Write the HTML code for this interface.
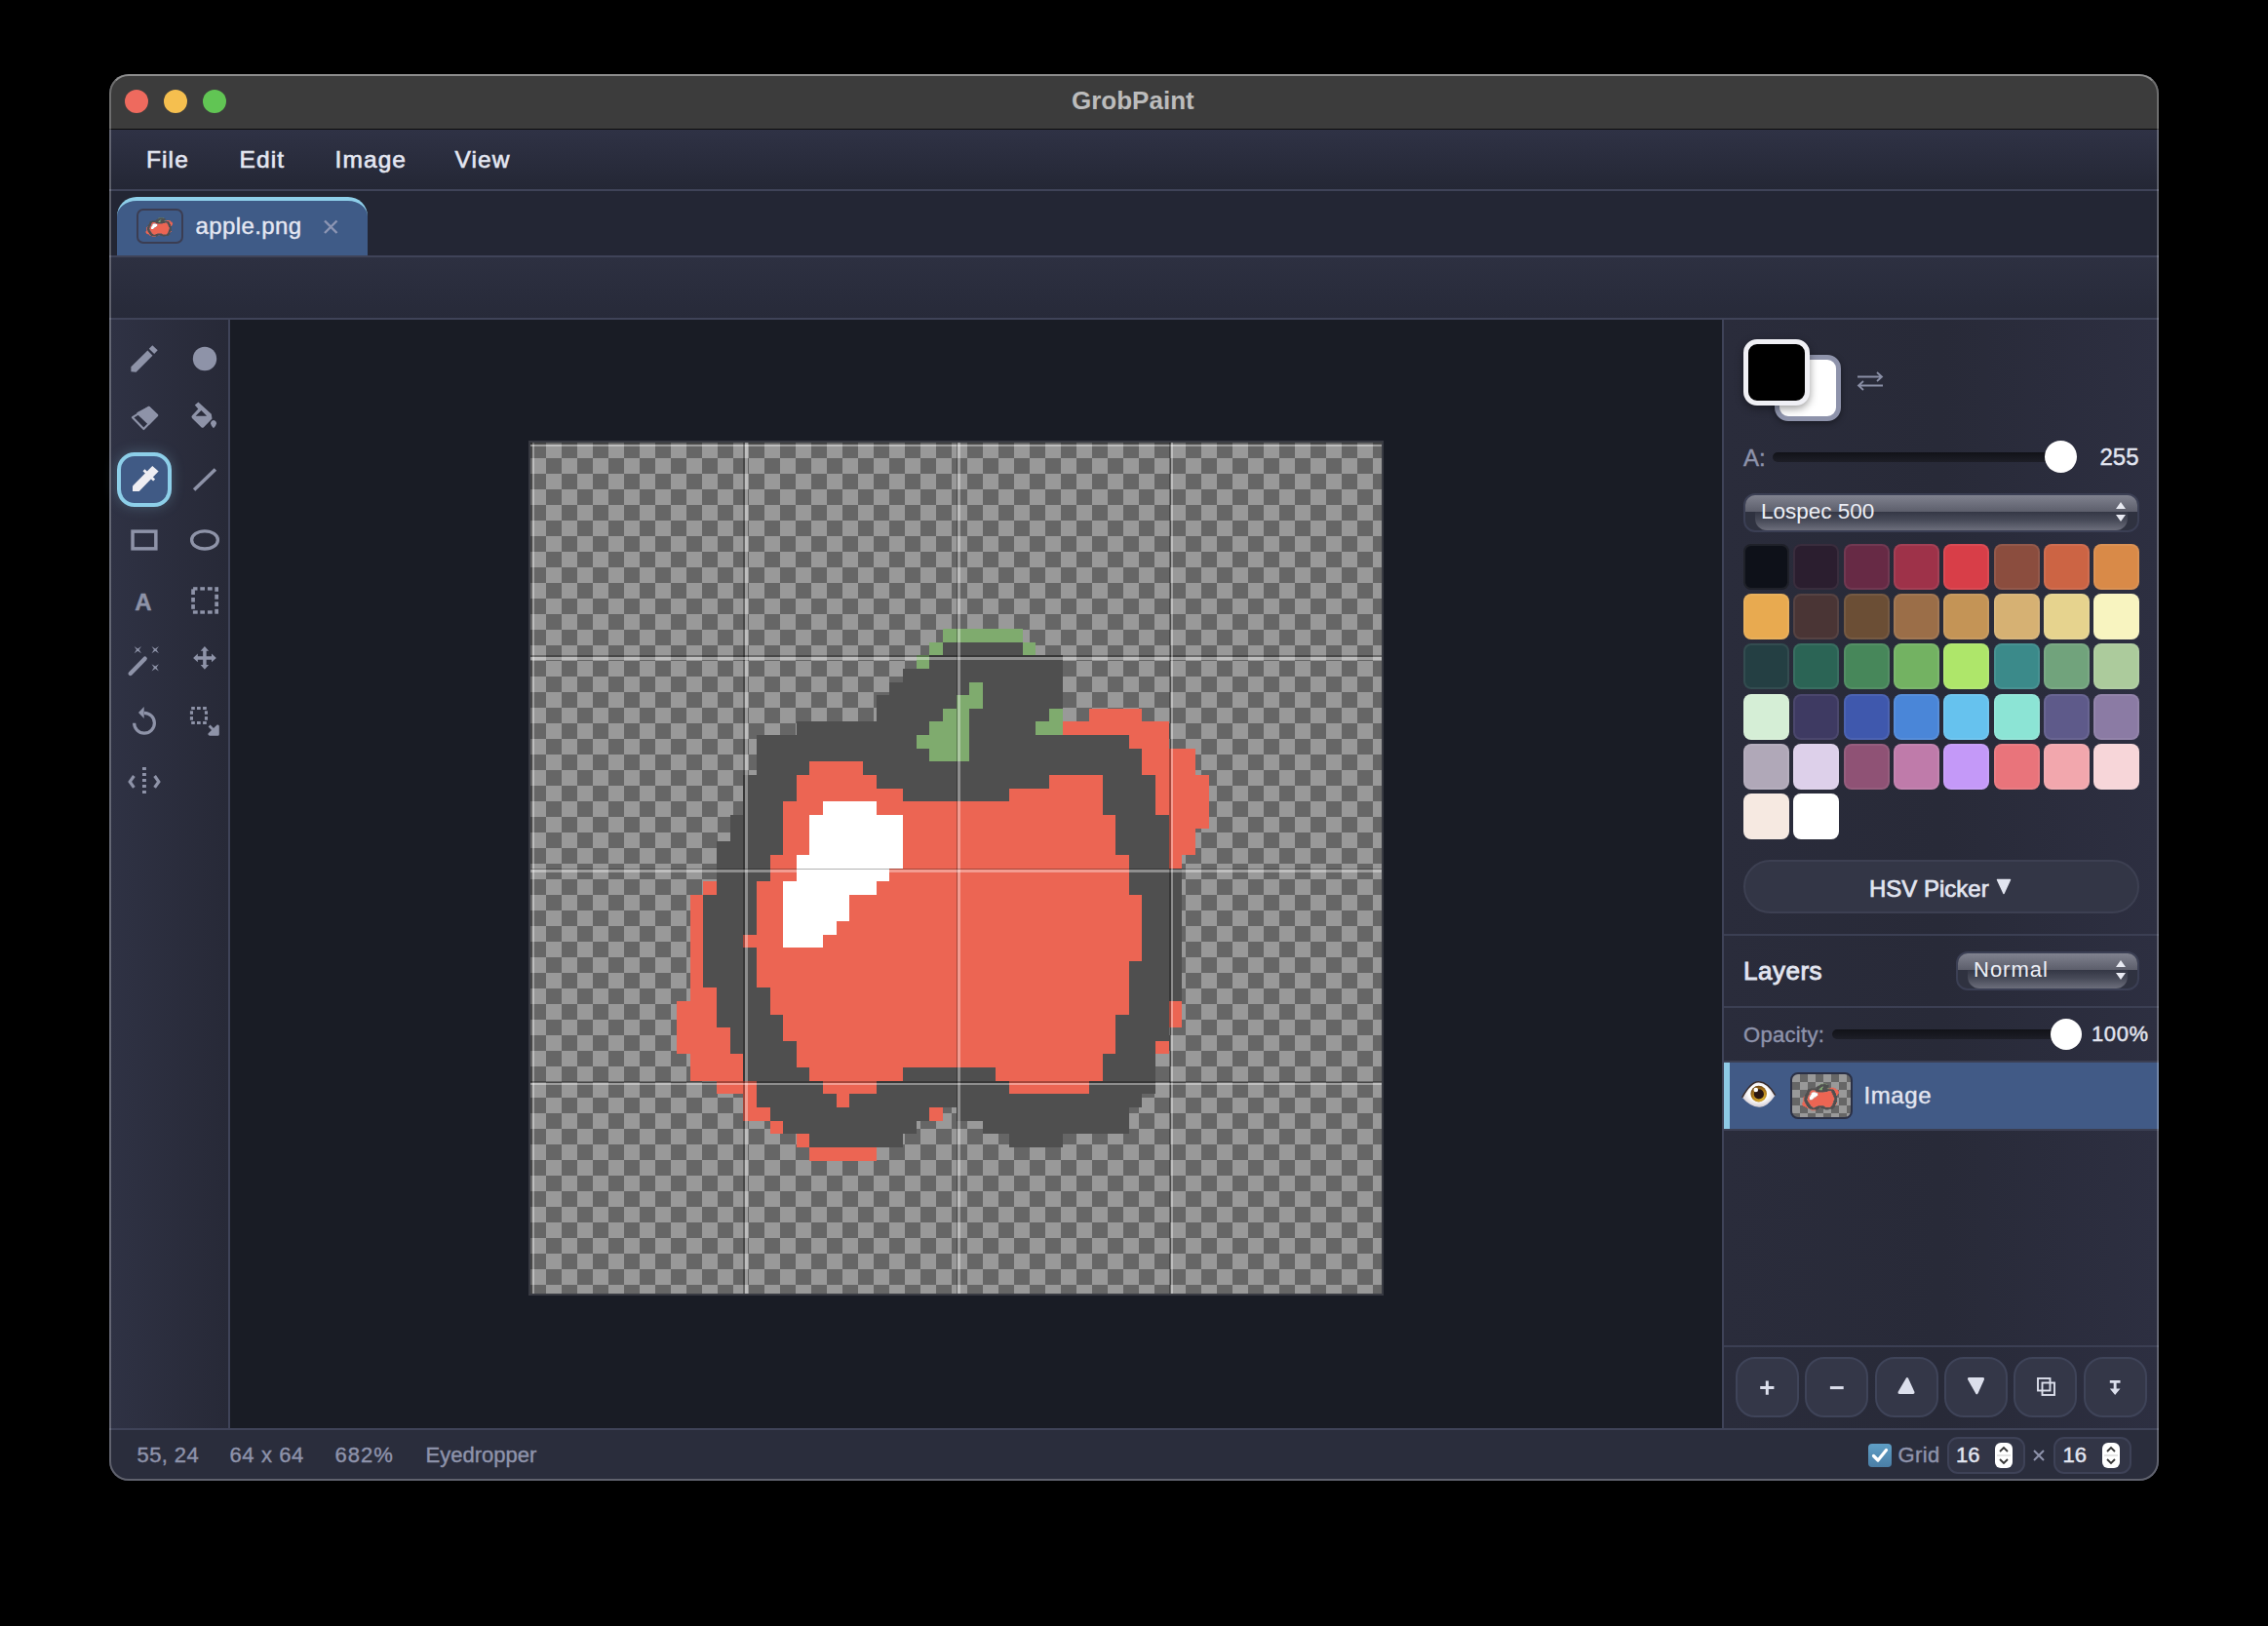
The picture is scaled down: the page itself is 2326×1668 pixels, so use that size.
<!DOCTYPE html>
<html><head><meta charset="utf-8">
<style>
*{box-sizing:border-box;margin:0;padding:0}
html,body{width:2326px;height:1668px;background:#000;overflow:hidden;font-family:"Liberation Sans",sans-serif}
.a{position:absolute}
.t{white-space:nowrap;line-height:1}
#win{left:112px;top:76px;width:2102px;height:1443px;border-radius:20px;overflow:hidden;background:#282b3a}
#outline{left:112px;top:76px;width:2102px;height:1443px;border-radius:20px;border:2px solid rgba(255,255,255,0.25);border-top-color:rgba(255,255,255,0.42);pointer-events:none}
#title{left:0;top:0;width:2102px;height:57px;background:#3c3c3c;border-bottom:1px solid #0d0d0d}
.dot{width:24px;height:24px;border-radius:50%;top:16px}
#menu{left:0;top:57px;width:2102px;height:63px;background:linear-gradient(#2f3245,#242735);border-bottom:2px solid #3f4358}
.mi{font-size:24.5px;color:#e4e7f2;letter-spacing:1.1px;-webkit-text-stroke:0.6px #e4e7f2}
#tabs{left:0;top:120px;width:2102px;height:68px;background:#232634;border-bottom:2px solid #3f4358}
#tab{left:8px;top:6px;width:257px;height:60px;background:#3f5b87;border-top:4px solid #8ecfea;border-radius:20px 20px 0 0}
#toolbar{left:0;top:188px;width:2102px;height:64px;background:linear-gradient(#2d3041,#272a39);border-bottom:2px solid #3f4358}
#tools{left:0;top:252px;width:124px;height:1137px;background:linear-gradient(90deg,#2f3244,#272937);border-right:2px solid #3f4358}
#canvasbg{left:124px;top:252px;width:1530px;height:1137px;background:#191c25}
#rpanel{left:1654px;top:252px;width:448px;height:1137px;background:linear-gradient(90deg,#2a2c3b,#282a38 50%,#2d2f41);border-left:2px solid #3f4358}
#status{left:0;top:1389px;width:2102px;height:54px;background:#2a2d3c;border-top:2px solid #3f4358}
.sw{width:47px;height:47px;border-radius:8px;box-shadow:inset 0 0 0 2px rgba(255,255,255,0.07)}
.hr{left:1768px;width:446px;height:2px;background:#3b3f53}
.dd{border-radius:12px;border:2px solid #3b3f54;background:#2f3240;overflow:hidden}.dd .u{position:absolute;left:0;top:0;right:0;height:17px;background:linear-gradient(#80828f,#5c5e6b)}.dd .l{position:absolute;left:10px;right:10px;top:17px;bottom:0;border-radius:0 0 12px 12px;background:linear-gradient(#343745,#474a58 45%,#6c6e7b)}
.btn{width:65px;height:62px;top:1392px;border-radius:20px;background:#343748;border:2px solid #3f4459}
.lbl{color:#8e93ab;-webkit-text-stroke:0.4px #8e93ab}
.val{color:#e2e5f0;-webkit-text-stroke:0.45px #e2e5f0}
</style></head><body>
<div id="win" class="a">
 <div id="title" class="a">
  <div class="a dot" style="left:16px;background:#ee6a5e"></div>
  <div class="a dot" style="left:56px;background:#f5bf4f"></div>
  <div class="a dot" style="left:96px;background:#61c554"></div>
 </div>
 <div id="menu" class="a"></div>
 <div id="tabs" class="a"><div id="tab" class="a"></div></div>
 <div id="toolbar" class="a"></div>
 <div id="tools" class="a"></div>
 <div id="canvasbg" class="a"></div>
 <div id="rpanel" class="a"></div>
 <div id="status" class="a"></div>
</div>

<!-- title & menu text -->
<div class="a t" style="left:1099px;top:90px;font-size:26px;font-weight:bold;color:#bcbcbc">GrobPaint</div>
<div class="a t mi" style="left:150px;top:152px">File</div>
<div class="a t mi" style="left:245.5px;top:152px">Edit</div>
<div class="a t mi" style="left:343.5px;top:152px">Image</div>
<div class="a t mi" style="left:466.5px;top:152px">View</div>

<!-- tab content -->
<div class="a" style="left:140px;top:214px;width:48px;height:36px;border:2px solid #3b3d52;border-radius:7px"></div>
<svg class="a" style="left:142px;top:216px" width="44" height="32" viewBox="0 0 64 64" preserveAspectRatio="none"><path fill="#7fab6e" d="M31 14h6v1h-6zM30 15h1v1h-1zM37 15h1v1h-1zM29 16h1v1h-1zM33 18h1v1h-1zM32 19h2v1h-2zM31 20h2v1h-2zM39 20h1v1h-1zM30 21h3v1h-3zM38 21h2v1h-2zM29 22h4v1h-4zM30 23h3v1h-3z"/><path fill="#4f4f4f" d="M31 15h6v1h-6zM30 16h10v1h-10zM28 17h12v1h-12zM27 18h6v1h-6zM34 18h6v1h-6zM26 19h6v1h-6zM34 19h6v1h-6zM26 20h5v1h-5zM33 20h6v1h-6zM20 21h10v1h-10zM33 21h5v1h-5zM17 22h12v1h-12zM33 22h12v1h-12zM17 23h13v1h-13zM33 23h13v1h-13zM17 24h4v1h-4zM25 24h21v1h-21zM16 25h4v1h-4zM26 25h13v1h-13zM43 25h4v1h-4zM16 26h4v1h-4zM28 26h8v1h-8zM43 26h4v1h-4zM16 27h3v1h-3zM43 27h4v1h-4zM15 28h4v1h-4zM44 28h4v1h-4zM15 29h4v1h-4zM44 29h4v1h-4zM14 30h5v1h-5zM44 30h4v1h-4zM14 31h4v1h-4zM45 31h3v1h-3zM14 32h4v1h-4zM45 32h4v1h-4zM14 33h3v1h-3zM45 33h4v1h-4zM13 34h4v1h-4zM46 34h3v1h-3zM13 35h4v1h-4zM46 35h3v1h-3zM13 36h4v1h-4zM46 36h3v1h-3zM13 37h3v1h-3zM46 37h3v1h-3zM13 38h4v1h-4zM46 38h3v1h-3zM13 39h4v1h-4zM45 39h4v1h-4zM13 40h4v1h-4zM45 40h4v1h-4zM14 41h4v1h-4zM45 41h4v1h-4zM14 42h4v1h-4zM45 42h3v1h-3zM14 43h5v1h-5zM44 43h4v1h-4zM15 44h4v1h-4zM44 44h4v1h-4zM15 45h5v1h-5zM44 45h3v1h-3zM16 46h4v1h-4zM43 46h4v1h-4zM16 47h5v1h-5zM28 47h7v1h-7zM43 47h4v1h-4zM17 48h5v1h-5zM26 48h10v1h-10zM42 48h5v1h-5zM17 49h6v1h-6zM24 49h22v1h-22zM18 50h12v1h-12zM32 50h13v1h-13zM19 51h10v1h-10zM34 51h11v1h-11zM21 52h7v1h-7zM36 52h4v1h-4z"/><path fill="#ec6553" d="M42 20h4v1h-4zM40 21h8v1h-8zM45 22h3v1h-3zM46 23h4v1h-4zM21 24h4v1h-4zM46 24h4v1h-4zM20 25h6v1h-6zM39 25h4v1h-4zM47 25h4v1h-4zM20 26h8v1h-8zM36 26h7v1h-7zM47 26h4v1h-4zM19 27h3v1h-3zM26 27h17v1h-17zM47 27h4v1h-4zM19 28h2v1h-2zM28 28h16v1h-16zM48 28h3v1h-3zM19 29h2v1h-2zM28 29h16v1h-16zM48 29h2v1h-2zM19 30h2v1h-2zM28 30h16v1h-16zM48 30h2v1h-2zM18 31h2v1h-2zM28 31h17v1h-17zM48 31h1v1h-1zM18 32h2v1h-2zM27 32h18v1h-18zM13 33h1v1h-1zM17 33h2v1h-2zM26 33h19v1h-19zM12 34h1v1h-1zM17 34h2v1h-2zM24 34h22v1h-22zM12 35h1v1h-1zM17 35h2v1h-2zM24 35h22v1h-22zM12 36h1v1h-1zM17 36h2v1h-2zM23 36h23v1h-23zM12 37h1v1h-1zM16 37h3v1h-3zM22 37h24v1h-24zM12 38h1v1h-1zM17 38h29v1h-29zM12 39h1v1h-1zM17 39h28v1h-28zM12 40h1v1h-1zM17 40h28v1h-28zM12 41h2v1h-2zM18 41h27v1h-27zM11 42h3v1h-3zM18 42h27v1h-27zM48 42h1v1h-1zM11 43h3v1h-3zM19 43h25v1h-25zM48 43h1v1h-1zM11 44h4v1h-4zM19 44h25v1h-25zM11 45h4v1h-4zM20 45h24v1h-24zM47 45h1v1h-1zM12 46h4v1h-4zM20 46h23v1h-23zM12 47h4v1h-4zM21 47h7v1h-7zM35 47h8v1h-8zM14 48h3v1h-3zM22 48h4v1h-4zM36 48h6v1h-6zM16 49h1v1h-1zM23 49h1v1h-1zM16 50h2v1h-2zM30 50h1v1h-1zM18 51h1v1h-1zM20 52h1v1h-1zM21 53h5v1h-5z"/><path fill="#ffffff" d="M22 27h4v1h-4zM21 28h7v1h-7zM21 29h7v1h-7zM21 30h7v1h-7zM20 31h8v1h-8zM20 32h7v1h-7zM19 33h7v1h-7zM19 34h5v1h-5zM19 35h5v1h-5zM19 36h4v1h-4zM19 37h3v1h-3z"/></svg>
<div class="a t" style="left:200.5px;top:220px;font-size:24px;color:#e4e7f2;letter-spacing:0.4px;-webkit-text-stroke:0.4px #e4e7f2">apple.png</div>
<svg class="a" style="left:330px;top:224px" width="18" height="18" viewBox="0 0 18 18"><path d="M3 2.5L15.5 15M15.5 2.5L3 15" stroke="#8c95b3" stroke-width="2.4"/></svg>

<!-- canvas -->
<div class="a" style="left:542px;top:452px;width:877px;height:877px;background:#383a42"></div>
<div class="a" style="left:544px;top:454px;width:873px;height:873px;background:repeating-conic-gradient(#999 0 25%,#666 0 50%) 0 0/32px 32px"></div>
<svg class="a" style="left:544px;top:454px" width="873" height="873" viewBox="0 0 64 64" shape-rendering="crispEdges"><path fill="#7fab6e" d="M31 14h6v1h-6zM30 15h1v1h-1zM37 15h1v1h-1zM29 16h1v1h-1zM33 18h1v1h-1zM32 19h2v1h-2zM31 20h2v1h-2zM39 20h1v1h-1zM30 21h3v1h-3zM38 21h2v1h-2zM29 22h4v1h-4zM30 23h3v1h-3z"/><path fill="#4f4f4f" d="M31 15h6v1h-6zM30 16h10v1h-10zM28 17h12v1h-12zM27 18h6v1h-6zM34 18h6v1h-6zM26 19h6v1h-6zM34 19h6v1h-6zM26 20h5v1h-5zM33 20h6v1h-6zM20 21h10v1h-10zM33 21h5v1h-5zM17 22h12v1h-12zM33 22h12v1h-12zM17 23h13v1h-13zM33 23h13v1h-13zM17 24h4v1h-4zM25 24h21v1h-21zM16 25h4v1h-4zM26 25h13v1h-13zM43 25h4v1h-4zM16 26h4v1h-4zM28 26h8v1h-8zM43 26h4v1h-4zM16 27h3v1h-3zM43 27h4v1h-4zM15 28h4v1h-4zM44 28h4v1h-4zM15 29h4v1h-4zM44 29h4v1h-4zM14 30h5v1h-5zM44 30h4v1h-4zM14 31h4v1h-4zM45 31h3v1h-3zM14 32h4v1h-4zM45 32h4v1h-4zM14 33h3v1h-3zM45 33h4v1h-4zM13 34h4v1h-4zM46 34h3v1h-3zM13 35h4v1h-4zM46 35h3v1h-3zM13 36h4v1h-4zM46 36h3v1h-3zM13 37h3v1h-3zM46 37h3v1h-3zM13 38h4v1h-4zM46 38h3v1h-3zM13 39h4v1h-4zM45 39h4v1h-4zM13 40h4v1h-4zM45 40h4v1h-4zM14 41h4v1h-4zM45 41h4v1h-4zM14 42h4v1h-4zM45 42h3v1h-3zM14 43h5v1h-5zM44 43h4v1h-4zM15 44h4v1h-4zM44 44h4v1h-4zM15 45h5v1h-5zM44 45h3v1h-3zM16 46h4v1h-4zM43 46h4v1h-4zM16 47h5v1h-5zM28 47h7v1h-7zM43 47h4v1h-4zM17 48h5v1h-5zM26 48h10v1h-10zM42 48h5v1h-5zM17 49h6v1h-6zM24 49h22v1h-22zM18 50h12v1h-12zM32 50h13v1h-13zM19 51h10v1h-10zM34 51h11v1h-11zM21 52h7v1h-7zM36 52h4v1h-4z"/><path fill="#ec6553" d="M42 20h4v1h-4zM40 21h8v1h-8zM45 22h3v1h-3zM46 23h4v1h-4zM21 24h4v1h-4zM46 24h4v1h-4zM20 25h6v1h-6zM39 25h4v1h-4zM47 25h4v1h-4zM20 26h8v1h-8zM36 26h7v1h-7zM47 26h4v1h-4zM19 27h3v1h-3zM26 27h17v1h-17zM47 27h4v1h-4zM19 28h2v1h-2zM28 28h16v1h-16zM48 28h3v1h-3zM19 29h2v1h-2zM28 29h16v1h-16zM48 29h2v1h-2zM19 30h2v1h-2zM28 30h16v1h-16zM48 30h2v1h-2zM18 31h2v1h-2zM28 31h17v1h-17zM48 31h1v1h-1zM18 32h2v1h-2zM27 32h18v1h-18zM13 33h1v1h-1zM17 33h2v1h-2zM26 33h19v1h-19zM12 34h1v1h-1zM17 34h2v1h-2zM24 34h22v1h-22zM12 35h1v1h-1zM17 35h2v1h-2zM24 35h22v1h-22zM12 36h1v1h-1zM17 36h2v1h-2zM23 36h23v1h-23zM12 37h1v1h-1zM16 37h3v1h-3zM22 37h24v1h-24zM12 38h1v1h-1zM17 38h29v1h-29zM12 39h1v1h-1zM17 39h28v1h-28zM12 40h1v1h-1zM17 40h28v1h-28zM12 41h2v1h-2zM18 41h27v1h-27zM11 42h3v1h-3zM18 42h27v1h-27zM48 42h1v1h-1zM11 43h3v1h-3zM19 43h25v1h-25zM48 43h1v1h-1zM11 44h4v1h-4zM19 44h25v1h-25zM11 45h4v1h-4zM20 45h24v1h-24zM47 45h1v1h-1zM12 46h4v1h-4zM20 46h23v1h-23zM12 47h4v1h-4zM21 47h7v1h-7zM35 47h8v1h-8zM14 48h3v1h-3zM22 48h4v1h-4zM36 48h6v1h-6zM16 49h1v1h-1zM23 49h1v1h-1zM16 50h2v1h-2zM30 50h1v1h-1zM18 51h1v1h-1zM20 52h1v1h-1zM21 53h5v1h-5z"/><path fill="#ffffff" d="M22 27h4v1h-4zM21 28h7v1h-7zM21 29h7v1h-7zM21 30h7v1h-7zM20 31h8v1h-8zM20 32h7v1h-7zM19 33h7v1h-7zM19 34h5v1h-5zM19 35h5v1h-5zM19 36h4v1h-4zM19 37h3v1h-3z"/></svg>
<div class="a" style="left:544.00px;top:454px;width:1.75px;height:873px;background:rgba(0,0,0,0.3)"></div>
<div class="a" style="left:545.75px;top:454px;width:2.5px;height:873px;background:rgba(255,255,255,0.36)"></div>
<div class="a" style="left:544px;top:454.00px;width:873px;height:1.75px;background:rgba(0,0,0,0.3)"></div>
<div class="a" style="left:544px;top:455.75px;width:873px;height:2.5px;background:rgba(255,255,255,0.36)"></div>
<div class="a" style="left:762.25px;top:454px;width:1.75px;height:873px;background:rgba(0,0,0,0.3)"></div>
<div class="a" style="left:764.00px;top:454px;width:2.5px;height:873px;background:rgba(255,255,255,0.36)"></div>
<div class="a" style="left:544px;top:672.25px;width:873px;height:1.75px;background:rgba(0,0,0,0.3)"></div>
<div class="a" style="left:544px;top:674.00px;width:873px;height:2.5px;background:rgba(255,255,255,0.36)"></div>
<div class="a" style="left:980.50px;top:454px;width:1.75px;height:873px;background:rgba(0,0,0,0.3)"></div>
<div class="a" style="left:982.25px;top:454px;width:2.5px;height:873px;background:rgba(255,255,255,0.36)"></div>
<div class="a" style="left:544px;top:890.50px;width:873px;height:1.75px;background:rgba(0,0,0,0.3)"></div>
<div class="a" style="left:544px;top:892.25px;width:873px;height:2.5px;background:rgba(255,255,255,0.36)"></div>
<div class="a" style="left:1198.75px;top:454px;width:1.75px;height:873px;background:rgba(0,0,0,0.3)"></div>
<div class="a" style="left:1200.50px;top:454px;width:2.5px;height:873px;background:rgba(255,255,255,0.36)"></div>
<div class="a" style="left:544px;top:1108.75px;width:873px;height:1.75px;background:rgba(0,0,0,0.3)"></div>
<div class="a" style="left:544px;top:1110.50px;width:873px;height:2.5px;background:rgba(255,255,255,0.36)"></div>

<!-- tool icons -->
<div class="a" style="left:120px;top:464px;width:56px;height:56px;border-radius:18px;background:#405a85;border:4px solid #8dcfe9;box-shadow:0 0 14px rgba(140,200,235,0.28)"></div>
<svg class="a" style="left:0;top:0" width="2326" height="1668">
 <g fill="#8e93a8">
  <!-- pencil -->
  <path d="M134.4 376.2L134.4 381.3L139.6 381.7L156.5 364.7L151.4 359.6Z"/>
  <path d="M152.8 357.7L156.3 354.2L161.7 359.3L158.2 363Z"/>
  <!-- circle -->
  <circle cx="210" cy="368" r="12.2"/>
  <!-- eraser -->
  <path d="M135.9 428.2L152.6 417.8L161.2 426.1L147.4 440.1Z" fill="none" stroke="#8e93a8" stroke-width="2.1" stroke-linejoin="round"/>
  <path d="M141.3 423.9L152.6 417.8L161.2 426.1L152.6 434.8Z" stroke="#8e93a8" stroke-width="2.1" stroke-linejoin="round"/>
  <!-- bucket -->
  <path fill-rule="evenodd" d="M199.8 415.6L203.4 412.4L216.8 424.7L217.5 429.5L209 438.2Q207.7 439.4 206.4 438.2L197 429Q195.8 427.6 197 426.3L203.3 419.5Z M200.6 426.8L206.4 421L212.1 426.8Z"/>
  <path d="M219 431Q222 431.5 222 434.5Q221.6 436.6 219 439.2Q216.4 436.6 216 434.5Q216 431.5 219 431Z"/>
  <!-- line -->
  <path d="M199.1 502.4L220.9 481.4" stroke="#8e93a8" stroke-width="3.5" fill="none"/>
  <!-- rect -->
  <rect x="136.05" y="545.15" width="23.8" height="17.7" fill="none" stroke="#8e93a8" stroke-width="3.5"/>
  <!-- ellipse -->
  <ellipse cx="210" cy="553.9" rx="13.4" ry="9.1" fill="none" stroke="#8e93a8" stroke-width="3.3"/>
  <!-- dashed select -->
  <rect x="198.1" y="602.2" width="4.4" height="3.4"/><rect x="205.3" y="602.2" width="4.7" height="3.4"/><rect x="212.9" y="602.2" width="4.8" height="3.4"/><rect x="220.3" y="602.2" width="3.7" height="4.6"/>
  <rect x="196.2" y="604.3" width="3.7" height="5.7"/><rect x="196.2" y="613" width="3.7" height="4.6"/><rect x="196.2" y="620.1" width="3.7" height="4.7"/>
  <rect x="220.3" y="609.8" width="3.7" height="4.9"/><rect x="220.3" y="617.4" width="3.7" height="4.7"/><rect x="220.3" y="624.8" width="3.7" height="4.9"/>
  <rect x="197.9" y="626.3" width="4.8" height="3.4"/><rect x="205.3" y="626.3" width="4.7" height="3.4"/><rect x="212.9" y="626.3" width="4.8" height="3.4"/>
  <!-- wand -->
  <path d="M133.7 691L148.6 675.7" stroke="#8e93a8" stroke-width="4.4" stroke-linecap="round" fill="none"/>
  <path d="M137.6 663L141.3 665.4L145 663L142.6 666.6L145 670.2L141.3 667.8L137.6 670.2L140 666.6Z"/>
  <path d="M155.5 663L159.2 665.4L162.9 663L160.5 666.6L162.9 670.2L159.2 667.8L155.5 670.2L157.9 666.6Z"/>
  <path d="M155.5 681.2L159.2 683.6L162.9 681.2L160.5 684.8L162.9 688.4L159.2 686L155.5 688.4L157.9 684.8Z"/>
  <!-- move -->
  <path d="M209.9 662.9L214.1 667.7H211.65V673.15H217V670.6L221.8 674.9L217 679.3V676.65H211.65V682.1H214.1L209.9 686.8L205.7 682.1H208.15V676.65H202.8V679.3L198.1 674.9L202.8 670.6V673.15H208.15V667.7H205.7Z"/>
  <!-- rotate -->
  <path d="M137.6 741.7A10.4 10.4 0 1 0 148 731.3" fill="none" stroke="#8e93a8" stroke-width="3.2"/>
  <path d="M147.7 725L142 731L147.7 736.9Z"/>
  <!-- crop select -->
  <rect x="196.2" y="725" width="3.6" height="3"/><rect x="202" y="725" width="3.7" height="3"/><rect x="208.1" y="725" width="3.7" height="3"/>
  <rect x="194.9" y="729.3" width="3.1" height="3.5"/><rect x="209.9" y="729.3" width="3.1" height="3.5"/>
  <rect x="194.9" y="735.1" width="3.1" height="3.6"/><rect x="209.9" y="735.1" width="3.1" height="3.6"/>
  <rect x="196.2" y="740" width="3.6" height="3"/><rect x="202" y="740" width="3.7" height="3"/><rect x="208.1" y="740" width="3.7" height="3"/>
  <path d="M215.6 743.6L219 747L222.7 743.6Q224.8 743 224.8 745L224.8 753.2Q224.8 754.7 223.3 754.7L215 754.7Q213 754.5 213.4 752.5L217 749L213.6 745.6Z"/>
  <!-- flip -->
  <path d="M137.4 796L133.2 801.9L137.4 807.9" fill="none" stroke="#8e93a8" stroke-width="3.2"/>
  <path d="M158.6 796L162.8 801.9L158.6 807.9" fill="none" stroke="#8e93a8" stroke-width="3.2"/>
  <rect x="146" y="787" width="3.9" height="3"/><rect x="146" y="793" width="3.9" height="3"/><rect x="146" y="799" width="3.9" height="3"/><rect x="146" y="805" width="3.9" height="3"/><rect x="146" y="811" width="3.9" height="3"/>
 </g>
 <!-- eyedropper (selected) -->
 <g fill="#efeef3">
  <path d="M136 498.4L136 503.9L142.7 503.9L162.6 483.6L156.3 478.1Z"/>
  <path d="M148.5 481.3L159.1 491.6L157.1 493.6L146.5 483.3Z"/>
 </g>
</svg>
<div class="a t" style="left:138.3px;top:606px;font-size:24px;font-weight:bold;color:#8e93a8;-webkit-text-stroke:0.4px #8e93a8">A</div>

<!-- right panel: colors -->
<div class="a" style="left:1820px;top:364px;width:68px;height:68px;border-radius:14px;background:#fff;border:5px solid #8e93ab;box-shadow:0 2px 6px rgba(0,0,0,0.4)"></div>
<div class="a" style="left:1788px;top:348px;width:68px;height:68px;border-radius:14px;background:#000;border:5px solid #f0f0f5;box-shadow:0 3px 9px rgba(0,0,0,0.4)"></div>
<svg class="a" style="left:1900px;top:376px" width="36" height="30" viewBox="0 0 36 30"><g fill="none" stroke="#8a8fa6" stroke-width="1.8"><path d="M5 10.5H30M25 6L30 10.5L25 15M31 19.5H6M11 15L6 19.5L11 24"/></g></svg>
<div class="a t lbl" style="left:1788px;top:457.5px;font-size:24px">A:</div>
<div class="a" style="left:1818px;top:464px;width:305px;height:10px;border-radius:5px;background:linear-gradient(#111218,#1d1e27)"></div>
<div class="a" style="left:2096.5px;top:452px;width:33px;height:33px;border-radius:50%;background:#fff"></div>
<div class="a t val" style="left:2153.5px;top:457px;font-size:24px;-webkit-text-stroke:0.4px #e2e5f0">255</div>
<div class="a dd" style="left:1788px;top:506px;width:406px;height:40px"><div class="u"></div><div class="l"></div></div>
<div class="a t" style="left:1806px;top:513.5px;font-size:22.5px;color:#eceef5">Lospec 500</div>
<svg class="a" style="left:2166px;top:512px" width="18" height="26" viewBox="0 0 18 26"><path d="M9 3L14 10H4Z M9 23L14 16H4Z" fill="#e8eaf2"/></svg>
<div class="a sw" style="left:1788.0px;top:558.0px;background:#0e1119"></div>
<div class="a sw" style="left:1839.3px;top:558.0px;background:#2b1e2f"></div>
<div class="a sw" style="left:1890.6px;top:558.0px;background:#672a45"></div>
<div class="a sw" style="left:1941.9px;top:558.0px;background:#9e3249"></div>
<div class="a sw" style="left:1993.2px;top:558.0px;background:#d83e48"></div>
<div class="a sw" style="left:2044.5px;top:558.0px;background:#8b4d3e"></div>
<div class="a sw" style="left:2095.8px;top:558.0px;background:#cc6444"></div>
<div class="a sw" style="left:2147.1px;top:558.0px;background:#d98a48"></div>
<div class="a sw" style="left:1788.0px;top:609.2px;background:#e8aa50"></div>
<div class="a sw" style="left:1839.3px;top:609.2px;background:#4a3535"></div>
<div class="a sw" style="left:1890.6px;top:609.2px;background:#6b4e35"></div>
<div class="a sw" style="left:1941.9px;top:609.2px;background:#9b6e48"></div>
<div class="a sw" style="left:1993.2px;top:609.2px;background:#c49456"></div>
<div class="a sw" style="left:2044.5px;top:609.2px;background:#d6b173"></div>
<div class="a sw" style="left:2095.8px;top:609.2px;background:#e6d38e"></div>
<div class="a sw" style="left:2147.1px;top:609.2px;background:#f8f4c0"></div>
<div class="a sw" style="left:1788.0px;top:660.4px;background:#243f43"></div>
<div class="a sw" style="left:1839.3px;top:660.4px;background:#2b6455"></div>
<div class="a sw" style="left:1890.6px;top:660.4px;background:#47875a"></div>
<div class="a sw" style="left:1941.9px;top:660.4px;background:#73b262"></div>
<div class="a sw" style="left:1993.2px;top:660.4px;background:#aee66a"></div>
<div class="a sw" style="left:2044.5px;top:660.4px;background:#3b8a8a"></div>
<div class="a sw" style="left:2095.8px;top:660.4px;background:#71a37c"></div>
<div class="a sw" style="left:2147.1px;top:660.4px;background:#accb9c"></div>
<div class="a sw" style="left:1788.0px;top:711.6px;background:#d5eed6"></div>
<div class="a sw" style="left:1839.3px;top:711.6px;background:#3e3a62"></div>
<div class="a sw" style="left:1890.6px;top:711.6px;background:#3f58ad"></div>
<div class="a sw" style="left:1941.9px;top:711.6px;background:#4a86d8"></div>
<div class="a sw" style="left:1993.2px;top:711.6px;background:#66c2ee"></div>
<div class="a sw" style="left:2044.5px;top:711.6px;background:#8ce4d5"></div>
<div class="a sw" style="left:2095.8px;top:711.6px;background:#5e5a8a"></div>
<div class="a sw" style="left:2147.1px;top:711.6px;background:#8b7ba4"></div>
<div class="a sw" style="left:1788.0px;top:762.8px;background:#b0a8b8"></div>
<div class="a sw" style="left:1839.3px;top:762.8px;background:#ddd0ea"></div>
<div class="a sw" style="left:1890.6px;top:762.8px;background:#8f5275"></div>
<div class="a sw" style="left:1941.9px;top:762.8px;background:#bf7baa"></div>
<div class="a sw" style="left:1993.2px;top:762.8px;background:#c499f8"></div>
<div class="a sw" style="left:2044.5px;top:762.8px;background:#e9747b"></div>
<div class="a sw" style="left:2095.8px;top:762.8px;background:#f2a7ad"></div>
<div class="a sw" style="left:2147.1px;top:762.8px;background:#f7d6d9"></div>
<div class="a sw" style="left:1788.0px;top:814.0px;background:#f6e9e1"></div>
<div class="a sw" style="left:1839.3px;top:814.0px;background:#ffffff"></div>
<div class="a" style="left:1788px;top:882px;width:406px;height:55px;border-radius:28px;background:#333646;border:2px solid #3d4052"></div>
<div class="a t val" style="left:1917px;top:900px;font-size:24px;letter-spacing:0px;-webkit-text-stroke:0.7px #e2e5f0">HSV Picker</div>
<svg class="a" style="left:2046px;top:900px" width="18" height="20" viewBox="0 0 18 20"><path d="M2.5 2.5H15.5L9 16.5Z" fill="#e2e5f0" stroke="#e2e5f0" stroke-width="1.5" stroke-linejoin="round"/></svg>

<!-- layers -->
<div class="a hr" style="top:958px"></div>
<div class="a t val" style="left:1788px;top:982.5px;font-size:26px;letter-spacing:0.5px;-webkit-text-stroke:0.9px #e2e5f0">Layers</div>
<div class="a dd" style="left:2006px;top:976px;width:188px;height:40px"><div class="u"></div><div class="l"></div></div>
<div class="a t" style="left:2024px;top:984px;font-size:22px;letter-spacing:1px;color:#eceef5">Normal</div>
<svg class="a" style="left:2166px;top:982px" width="18" height="26" viewBox="0 0 18 26"><path d="M9 3L14 10H4Z M9 23L14 16H4Z" fill="#e8eaf2"/></svg>
<div class="a hr" style="top:1032px"></div>
<div class="a t lbl" style="left:1788px;top:1050.5px;font-size:22px;letter-spacing:0.3px">Opacity:</div>
<div class="a" style="left:1879px;top:1056px;width:242px;height:10px;border-radius:5px;background:linear-gradient(#111218,#1d1e27)"></div>
<div class="a" style="left:2103px;top:1045px;width:32px;height:32px;border-radius:50%;background:#fff"></div>
<div class="a t val" style="left:2145px;top:1049.5px;font-size:22px;letter-spacing:0.6px">100%</div>
<div class="a hr" style="top:1088px"></div>
<div class="a" style="left:1768px;top:1090px;width:446px;height:68px;background:#415a86"></div>
<div class="a" style="left:1768px;top:1090px;width:6px;height:68px;background:#8ecae6"></div>
<div class="a hr" style="top:1158px"></div>
<svg class="a" style="left:1784px;top:1106px" width="40" height="34" viewBox="0 0 40 34">
 <defs><radialGradient id="scl" cx="0.5" cy="0.45" r="0.6"><stop offset="0.5" stop-color="#ffffff"/><stop offset="1" stop-color="#c9c0c8"/></radialGradient>
 <radialGradient id="iri" cx="0.6" cy="0.7" r="0.7"><stop offset="0" stop-color="#e8c23a"/><stop offset="0.6" stop-color="#b8841c"/><stop offset="1" stop-color="#6e4614"/></radialGradient></defs>
 <path d="M2.7 19.8Q12 3 20 3.8Q29 4.2 36.7 17.6Q28 30.5 20 29.7Q11 29.5 2.7 19.8Z" fill="url(#scl)"/>
 <circle cx="19.7" cy="16.1" r="8.3" fill="url(#iri)"/>
 <circle cx="19.9" cy="16.4" r="5.1" fill="#2a1612"/>
 <circle cx="16.8" cy="12" r="2.3" fill="#fff"/>
 <path d="M2.7 19.8Q12 3 20 3.8Q29 4.2 36.7 17.6" fill="none" stroke="#3a2e2e" stroke-width="1.6"/>
</svg>
<div class="a" style="left:1836px;top:1100px;width:64px;height:48px;border-radius:8px;border:2px solid #2b3045;overflow:hidden;background:repeating-conic-gradient(#666 0 25%,#999 0 50%) 0 0/16px 16px"></div>
<svg class="a" style="left:1838px;top:1102px" width="60" height="44" viewBox="0 0 64 64" preserveAspectRatio="none"><path fill="#7fab6e" d="M31 14h6v1h-6zM30 15h1v1h-1zM37 15h1v1h-1zM29 16h1v1h-1zM33 18h1v1h-1zM32 19h2v1h-2zM31 20h2v1h-2zM39 20h1v1h-1zM30 21h3v1h-3zM38 21h2v1h-2zM29 22h4v1h-4zM30 23h3v1h-3z"/><path fill="#4f4f4f" d="M31 15h6v1h-6zM30 16h10v1h-10zM28 17h12v1h-12zM27 18h6v1h-6zM34 18h6v1h-6zM26 19h6v1h-6zM34 19h6v1h-6zM26 20h5v1h-5zM33 20h6v1h-6zM20 21h10v1h-10zM33 21h5v1h-5zM17 22h12v1h-12zM33 22h12v1h-12zM17 23h13v1h-13zM33 23h13v1h-13zM17 24h4v1h-4zM25 24h21v1h-21zM16 25h4v1h-4zM26 25h13v1h-13zM43 25h4v1h-4zM16 26h4v1h-4zM28 26h8v1h-8zM43 26h4v1h-4zM16 27h3v1h-3zM43 27h4v1h-4zM15 28h4v1h-4zM44 28h4v1h-4zM15 29h4v1h-4zM44 29h4v1h-4zM14 30h5v1h-5zM44 30h4v1h-4zM14 31h4v1h-4zM45 31h3v1h-3zM14 32h4v1h-4zM45 32h4v1h-4zM14 33h3v1h-3zM45 33h4v1h-4zM13 34h4v1h-4zM46 34h3v1h-3zM13 35h4v1h-4zM46 35h3v1h-3zM13 36h4v1h-4zM46 36h3v1h-3zM13 37h3v1h-3zM46 37h3v1h-3zM13 38h4v1h-4zM46 38h3v1h-3zM13 39h4v1h-4zM45 39h4v1h-4zM13 40h4v1h-4zM45 40h4v1h-4zM14 41h4v1h-4zM45 41h4v1h-4zM14 42h4v1h-4zM45 42h3v1h-3zM14 43h5v1h-5zM44 43h4v1h-4zM15 44h4v1h-4zM44 44h4v1h-4zM15 45h5v1h-5zM44 45h3v1h-3zM16 46h4v1h-4zM43 46h4v1h-4zM16 47h5v1h-5zM28 47h7v1h-7zM43 47h4v1h-4zM17 48h5v1h-5zM26 48h10v1h-10zM42 48h5v1h-5zM17 49h6v1h-6zM24 49h22v1h-22zM18 50h12v1h-12zM32 50h13v1h-13zM19 51h10v1h-10zM34 51h11v1h-11zM21 52h7v1h-7zM36 52h4v1h-4z"/><path fill="#ec6553" d="M42 20h4v1h-4zM40 21h8v1h-8zM45 22h3v1h-3zM46 23h4v1h-4zM21 24h4v1h-4zM46 24h4v1h-4zM20 25h6v1h-6zM39 25h4v1h-4zM47 25h4v1h-4zM20 26h8v1h-8zM36 26h7v1h-7zM47 26h4v1h-4zM19 27h3v1h-3zM26 27h17v1h-17zM47 27h4v1h-4zM19 28h2v1h-2zM28 28h16v1h-16zM48 28h3v1h-3zM19 29h2v1h-2zM28 29h16v1h-16zM48 29h2v1h-2zM19 30h2v1h-2zM28 30h16v1h-16zM48 30h2v1h-2zM18 31h2v1h-2zM28 31h17v1h-17zM48 31h1v1h-1zM18 32h2v1h-2zM27 32h18v1h-18zM13 33h1v1h-1zM17 33h2v1h-2zM26 33h19v1h-19zM12 34h1v1h-1zM17 34h2v1h-2zM24 34h22v1h-22zM12 35h1v1h-1zM17 35h2v1h-2zM24 35h22v1h-22zM12 36h1v1h-1zM17 36h2v1h-2zM23 36h23v1h-23zM12 37h1v1h-1zM16 37h3v1h-3zM22 37h24v1h-24zM12 38h1v1h-1zM17 38h29v1h-29zM12 39h1v1h-1zM17 39h28v1h-28zM12 40h1v1h-1zM17 40h28v1h-28zM12 41h2v1h-2zM18 41h27v1h-27zM11 42h3v1h-3zM18 42h27v1h-27zM48 42h1v1h-1zM11 43h3v1h-3zM19 43h25v1h-25zM48 43h1v1h-1zM11 44h4v1h-4zM19 44h25v1h-25zM11 45h4v1h-4zM20 45h24v1h-24zM47 45h1v1h-1zM12 46h4v1h-4zM20 46h23v1h-23zM12 47h4v1h-4zM21 47h7v1h-7zM35 47h8v1h-8zM14 48h3v1h-3zM22 48h4v1h-4zM36 48h6v1h-6zM16 49h1v1h-1zM23 49h1v1h-1zM16 50h2v1h-2zM30 50h1v1h-1zM18 51h1v1h-1zM20 52h1v1h-1zM21 53h5v1h-5z"/><path fill="#ffffff" d="M22 27h4v1h-4zM21 28h7v1h-7zM21 29h7v1h-7zM21 30h7v1h-7zM20 31h8v1h-8zM20 32h7v1h-7zM19 33h7v1h-7zM19 34h5v1h-5zM19 35h5v1h-5zM19 36h4v1h-4zM19 37h3v1h-3z"/></svg>
<div class="a t val" style="left:1911.5px;top:1112px;font-size:24px;letter-spacing:0.6px;-webkit-text-stroke:0.4px #e2e5f0">Image</div>

<!-- layer buttons -->
<div class="a hr" style="top:1380px"></div>
<div class="a btn" style="left:1780px"></div>
<div class="a btn" style="left:1851px"></div>
<div class="a btn" style="left:1923px"></div>
<div class="a btn" style="left:1994px"></div>
<div class="a btn" style="left:2065px"></div>
<div class="a btn" style="left:2137px"></div>
<svg class="a" style="left:0;top:0" width="2326" height="1668">
 <g fill="#dcdfec">
  <path d="M1810.8 1416.5h3v5.6h5.6v3h-5.6v5.6h-3v-5.6h-5.6v-3h5.6z"/>
  <rect x="1876.9" y="1422.1" width="13.8" height="3"/>
  <path d="M1955 1413.5Q1956 1412.5 1957 1413.8L1963.5 1428Q1963.8 1430 1962 1430H1948Q1946.2 1430 1946.5 1428Z"/>
  <path d="M2026.5 1430Q2027.5 1431 2028.5 1429.6L2035 1415Q2035.3 1413 2033.5 1413H2019.5Q2017.7 1413 2018 1415Z"/>
  <path d="M2163.8 1416h10.7v2.8h-3.9v5.7h3.9l-5.35 6.5l-5.35-6.5h3.9v-5.7h-3.9z"/>
 </g>
 <g fill="none" stroke="#dcdfec" stroke-width="1.9">
  <rect x="2090" y="1414" width="12.5" height="12.5"/>
  <rect x="2094.5" y="1418.5" width="12.5" height="12.5"/>
 </g>
</svg>

<!-- status bar -->
<div class="a t lbl" style="left:140.5px;top:1482px;font-size:22px;letter-spacing:0.4px">55, 24</div>
<div class="a t lbl" style="left:235.5px;top:1482px;font-size:22px;letter-spacing:0.6px">64 x 64</div>
<div class="a t lbl" style="left:343.5px;top:1482px;font-size:22px;letter-spacing:1px">682%</div>
<div class="a t lbl" style="left:436.5px;top:1482px;font-size:22px">Eyedropper</div>
<div class="a" style="left:1916px;top:1481px;width:24px;height:24px;border-radius:4px;background:linear-gradient(#5f9fc6,#4a7ea6)"></div>
<svg class="a" style="left:1916px;top:1481px" width="24" height="24" viewBox="0 0 24 24"><path d="M5.5 12.5L10 17L18.5 6.5" fill="none" stroke="#fff" stroke-width="3.2" stroke-linecap="round" stroke-linejoin="round"/></svg>
<div class="a t lbl" style="left:1946.5px;top:1482px;font-size:22px;letter-spacing:0.4px">Grid</div>
<div class="a" style="left:1997px;top:1474px;width:80px;height:38px;border-radius:11px;background:#323546;border:2px solid #3e4257"></div>
<div class="a t val" style="left:2006px;top:1482px;font-size:22px">16</div>
<div class="a" style="left:2046px;top:1480px;width:18px;height:26px;border-radius:6px;background:#fff"></div>
<svg class="a" style="left:2046px;top:1480px" width="18" height="26" viewBox="0 0 18 26"><path d="M5 9L9 5L13 9M5 17L9 21L13 17" fill="none" stroke="#333" stroke-width="1.8"/><rect x="2" y="12.5" width="14" height="1" fill="#ccc"/></svg>
<svg class="a" style="left:2084px;top:1486px" width="14" height="14" viewBox="0 0 14 14"><path d="M2 2L12 12M12 2L2 12" stroke="#8e93ab" stroke-width="2"/></svg>
<div class="a" style="left:2106px;top:1474px;width:80px;height:38px;border-radius:11px;background:#323546;border:2px solid #3e4257"></div>
<div class="a t val" style="left:2115.5px;top:1482px;font-size:22px">16</div>
<div class="a" style="left:2156px;top:1480px;width:18px;height:26px;border-radius:6px;background:#fff"></div>
<svg class="a" style="left:2156px;top:1480px" width="18" height="26" viewBox="0 0 18 26"><path d="M5 9L9 5L13 9M5 17L9 21L13 17" fill="none" stroke="#333" stroke-width="1.8"/><rect x="2" y="12.5" width="14" height="1" fill="#ccc"/></svg>
<div id="outline" class="a"></div>
</body></html>
